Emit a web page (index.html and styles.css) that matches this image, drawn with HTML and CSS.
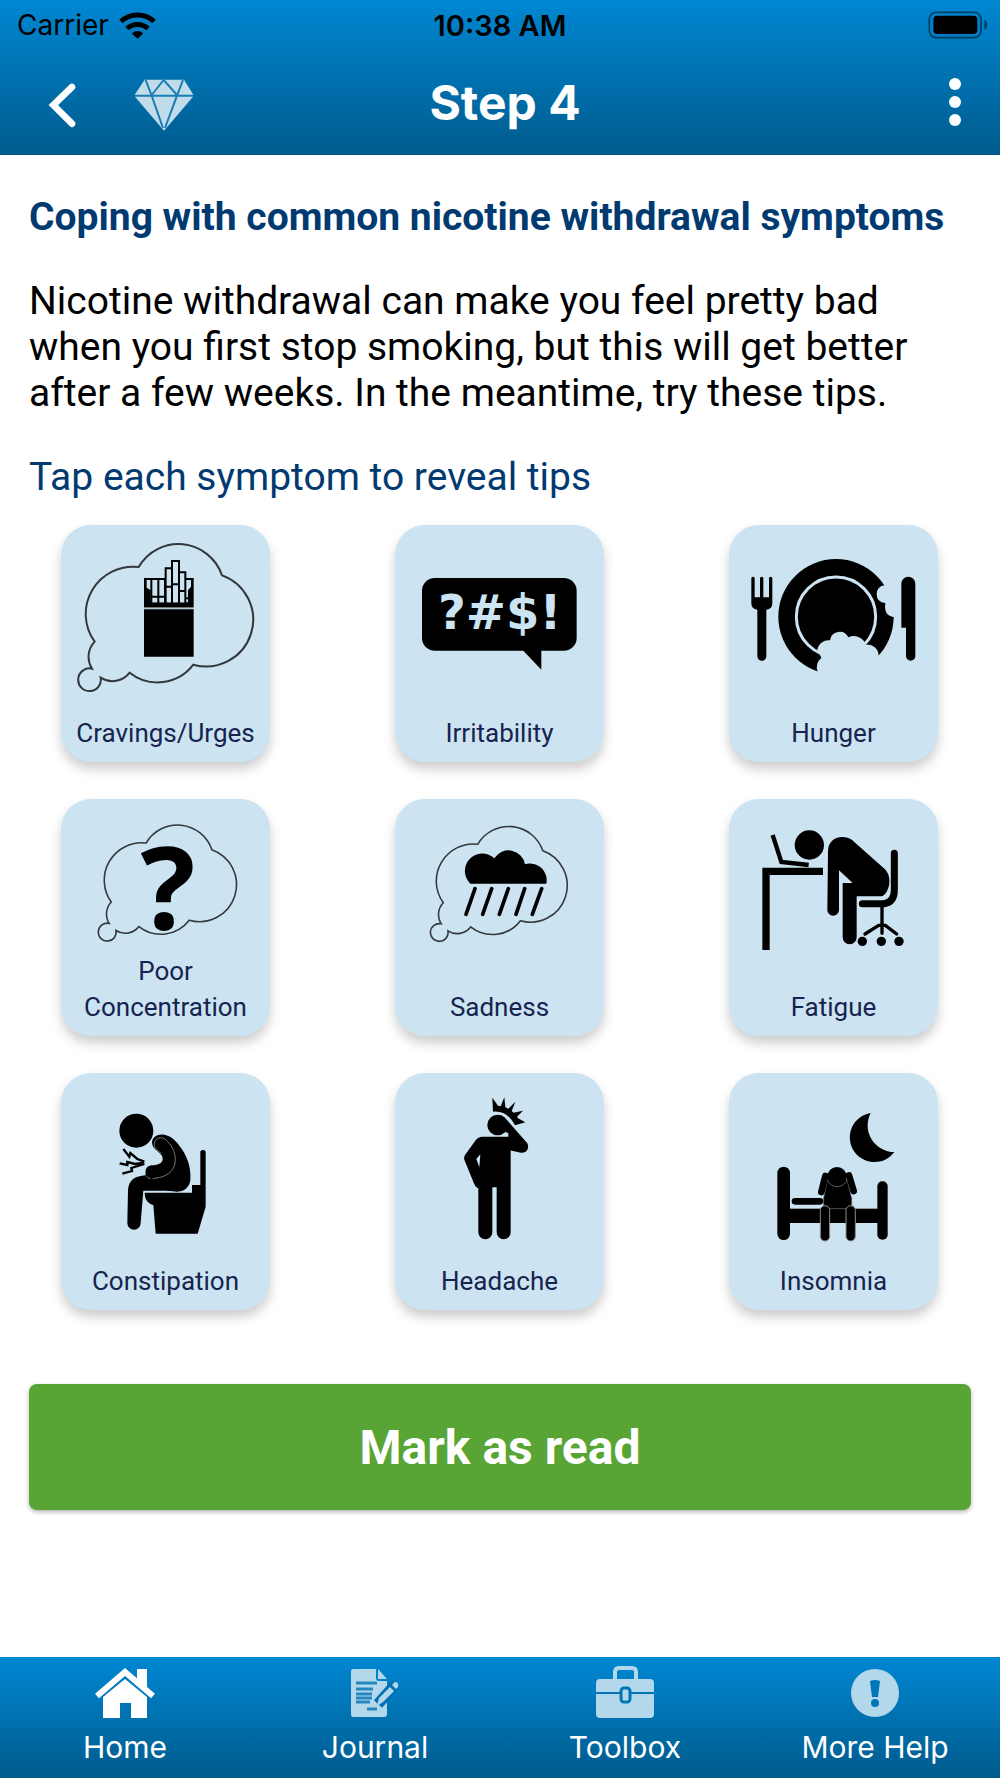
FILE: index.html
```html
<!DOCTYPE html>
<html lang="en">
<head>
    <meta charset="UTF-8">
    <meta name="viewport" content="width=device-width, initial-scale=1">
    <title>Step 4</title>
    <link rel="stylesheet" href="styles.css">
</head>
<body>
    <header class="top">
        <div class="status">
            <span class="carrier">Carrier
                <svg width="37" height="29" viewBox="360 28 112 86" fill="none" stroke="#000" stroke-width="15">
                    <path d="M366 59A73 73 0 0 1 466 59M384 80A48 48 0 0 1 448 80"/>
                    <path d="M416 111L399 95A24 24 0 0 1 433 95Z" fill="#000" stroke="none"/>
                </svg>
            </span>
            <span class="time">10:38 AM</span>
            <svg class="battery" width="60" height="28" viewBox="1283 31 180 84">
                <rect x="1287" y="35" width="155" height="76" rx="20" fill="none" stroke="#000" stroke-opacity=".5" stroke-width="5"/>
                <rect x="1299" y="45" width="132" height="55" rx="12"/>
                <path d="M1452 58Q1461 62 1461 72Q1461 83 1452 87Z" opacity=".5"/>
            </svg>
        </div>
        <div class="nav">
            <div class="nav-left">
                <button class="icon-btn" aria-label="Back">
                    <svg width="26" height="44" viewBox="147 249 78 132" fill="none" stroke="#fff" stroke-width="20">
                        <path d="M216 261L160 315L216 371" stroke-linecap="round"/>
                    </svg>
                </button>
                <button class="icon-btn" aria-label="Rewards">
                    <svg width="58" height="52" viewBox="405 241 174 156">
                        <path d="M434 243H552L579 287V294L492 396L405 294V287Z" fill="#c0dceb"/>
                        <path d="M405 291H579M437 244L455 291L489 388M549 244L531 291L495 388M455 289L491 244L531 289" fill="none" stroke="#1a7db5" stroke-width="6"/>
                    </svg>
                </button>
            </div>
            <h1>Step 4</h1>
            <button class="icon-btn menu-btn" aria-label="Menu">
                <svg width="12" height="50" viewBox="0 0 12 50" fill="#fff">
                    <circle cx="6" cy="6" r="6"/><circle cx="6" cy="24" r="6"/><circle cx="6" cy="42" r="6"/>
                </svg>
            </button>
        </div>
    </header>

    <main>
        <h2>Coping with common nicotine withdrawal symptoms</h2>
        <p>Nicotine withdrawal can make you feel pretty bad when you first stop smoking, but this will get better after a few weeks. In the meantime, try these tips.</p>
        <p class="hint">Tap each symptom to reveal tips</p>

        <div class="symptoms">
            <button class="card">
                <svg viewBox="33 30 627 450">
                    <path id="bubble" d="M266 156A138 138 0 0 1 516 181A140.8 140.8 0 0 1 430 449A135 135 0 0 1 239 473A65 65 0 0 1 152 488A34 34 0 1 1 126 461A66 66 0 0 1 134 380A142 142 0 0 1 266 156Z" fill="none" stroke="#33383c" stroke-width="6"/>
                    <path d="M282 283H431V425H282Z"/>
                    <path d="M282 278H431" stroke="#777" stroke-width="4"/>
                    <path d="M282 188L290 192V218L302 226V262H414V226L423 215V192L431 188V276H282Z"/>
                    <path d="M304 195H345V262H304ZM347 160H365V262H347ZM366 138H387V262H366ZM388 172H406V262H388Z" fill="#cce3f1"/>
                    <g fill="none" stroke="#000" stroke-width="6">
                        <path d="M284 192H345V265M304 192V265M325 192V265M302 245H345M347 265V160H365M366 265V138H387V265M387 172H406V265M406 192H429M347 215H366M366 208H387M387 228H406M406 250H416"/>
                    </g>
                </svg>
                <span>Cravings/Urges</span>
            </button>
            <button class="card">
                <svg viewBox="30 30 627 450">
                    <rect x="111" y="189" width="464" height="218" rx="38"/>
                    <path d="M410 402L469 464V402Z"/>
                    <text class="swear" x="344" y="342">?#$!</text>
                </svg>
                <span>Irritability</span>
            </button>
            <button class="card">
                <svg viewBox="27 30 627 450">
                    <path d="M94 190a5 5 0 0 1 10 0V247H120V190a5 5 0 0 1 10 0V247H147V190a5 5 0 0 1 10 0V265Q157 283 139 284V424A13 13 0 0 1 112 424V284Q94 283 94 265Z"/>
                    <circle cx="348" cy="305" r="173"/>
                    <circle cx="348" cy="305" r="119" fill="none" stroke="#cce3f1" stroke-width="9"/>
                    <path class="cut" d="M293 470Q284 446 304 428L292 404A34 34 0 0 1 330 376A29 29 0 0 1 385 367A39 39 0 0 1 438 389A34 34 0 0 1 476 422L530 500H293Z"/>
                    <path class="cut" d="M493 203V211Q470 215 470 238Q470 262 496 264Q490 304 524 306L560 300V200Z"/>
                    <path d="M544 206A21 21 0 0 1 586 206V423A14 14 0 0 1 558 423V338H544Z"/>
                </svg>
                <span>Hunger</span>
            </button>
            <button class="card">
                <svg viewBox="33 27 627 450">
                    <use href="#bubble" transform="translate(78 36) scale(.79)"/>
                    <text class="question" x="354" y="418">?</text>
                </svg>
                <span>Poor<br>Concentration</span>
            </button>
            <button class="card">
                <svg viewBox="30 27 627 450">
                    <use href="#bubble" transform="translate(70 41) scale(.782)"/>
                    <path d="M256 281A52 52 0 0 1 328 205A50 50 0 0 1 420 223A50 50 0 0 1 484 281Z"/>
                    <path d="M270 296L243 373M320 296L293 373M370 296L343 373M419 296L393 373M470 296L442 373" stroke="#000" stroke-width="11" stroke-linecap="round"/>
                </svg>
                <span>Sadness</span>
            </button>
            <button class="card">
                <svg viewBox="27 27 627 450">
                    <circle cx="268" cy="165" r="44"/>
                    <path d="M158 135L184 216L266 225" fill="none" stroke="#000" stroke-width="13"/>
                    <path d="M127 233H309V255H149V480H127Z"/>
                    <path d="M324 185C324 150 350 140 368 141C385 142 395 148 402 155L495 238C512 256 512 285 500 305Q492 319 480 319H410V442A21 21 0 0 1 368 442V279H398L357 241V360A17 17 0 0 1 322 360Z"/>
                    <g fill="none" stroke="#000" stroke-linecap="round">
                        <path d="M427 341H492Q523 337 523 300V190" stroke-width="21"/>
                        <path d="M486 350V430M435 432L476 406H496L530 432" stroke-width="10"/>
                    </g>
                    <circle cx="427" cy="454" r="14"/><circle cx="484" cy="454" r="14"/><circle cx="537" cy="454" r="14"/>
                </svg>
                <span>Fatigue</span>
            </button>
            <button class="card">
                <svg viewBox="33 24 627 450">
                    <circle cx="259" cy="197" r="51"/>
                    <path d="M306 232C308 205 345 200 370 222C405 255 425 300 421 345C418 370 400 380 380 380C350 376 320 378 280 377L272 474A20 20 0 0 1 232 474L234 375C236 345 255 333 287 331C284 305 295 303 305 301C325 299 340 295 338 278C335 262 306 255 306 232Z"/>
                    <path d="M284 383H426V360H451V260Q451 255 459 255T467 260V425L443 506H317L310 420C295 415 284 405 284 383Z"/>
                    <path d="M334 265C318 255 311 245 313 236C315 218 335 214 346 223C372 245 380 275 374 300C365 330 335 338 308 341M302 341Q294 340 289 334" fill="none" stroke="#777" stroke-width="3"/>
                    <path d="M220 252L238 275L241 264L262 282L283 290M209 295L232 300V291L255 297L283 293M217 326L246 318L244 309L283 297" fill="none" stroke="#000" stroke-width="7"/>
                </svg>
                <span>Constipation</span>
            </button>
            <button class="card">
                <svg viewBox="30 24 627 450">
                    <path d="M322 98L339 122L347 124L358 97L361 127L370 131L391 110L380 138L386 143L414 137L396 155L399 160L421 172L390 181Q367 136 324 140Z"/>
                    <circle cx="338" cy="180" r="31"/>
                    <path d="M345 150Q358 154 366 165L427 235C434 250 425 265 408 263L370 255V205L357 199Z"/>
                    <path fill-rule="evenodd" d="M292 215H377V502A21 21 0 0 1 335 502V367H322V502A21 21 0 0 1 280 502V370C272 368 268 358 264 348L238 284Q236 276 240 270L272 226Q280 215 292 215ZM286 268L274 282L283 307Z"/>
                </svg>
                <span>Headache</span>
            </button>
            <button class="card">
                <svg viewBox="27 24 627 450">
                    <path d="M452 144A74 74 0 1 0 523 261A80 80 0 0 1 452 144Z"/>
                    <rect x="172" y="305" width="38" height="220" rx="19"/>
                    <rect x="472" y="349" width="31" height="175" rx="15"/>
                    <rect x="205" y="431" width="270" height="43"/>
                    <rect x="215" y="399" width="95" height="20" rx="10"/>
                    <path d="M322 345L311 400V431H395V400L381 345Z" stroke="#566067" stroke-width="2"/>
                    <path d="M316 333L304 381M387 331L401 378" stroke="#000" stroke-width="20" stroke-linecap="round"/>
                    <circle cx="351" cy="335" r="29"/>
                    <path d="M321 346Q334 365 351 365T382 346" fill="none" stroke="#566067" stroke-width="3"/>
                    <g stroke="#908c88" stroke-width="3">
                        <rect x="301" y="422" width="28" height="106" rx="14"/>
                        <rect x="378" y="422" width="28" height="106" rx="14"/>
                    </g>
                </svg>
                <span>Insomnia</span>
            </button>
        </div>

        <button class="read-btn">Mark as read</button>
    </main>

    <nav class="tabs">
        <a href="#home" class="active">
            <svg width="60" height="50" viewBox="0 0 60 50" fill="#fff">
                <path d="M42 1H52V20L42 12Z"/>
                <path d="M2 28L30 4L58 28" fill="none" stroke="#fff" stroke-width="6"/>
                <path d="M8 29L30 11L52 29V50H36V35H25V50H8Z"/>
            </svg>
            Home
        </a>
        <a href="#journal">
            <svg width="50" height="50" viewBox="0 0 50 50">
                <path d="M3 1H26V10Q26 13 29 13H37V46Q37 49 34 49H3Q1 49 1 46V3Q1 1 3 1Z" fill="#b3d7eb"/>
                <path d="M28 1L37 11H28Z" fill="#b3d7eb"/>
                <path d="M6 15H27M6 21H23M6 26H22M6 30H22M6 34H20M17 41H27" stroke="#2487bf" stroke-width="3"/>
                <path d="M28 36L45 17" stroke="#0072b4" stroke-width="11"/>
                <path d="M27 38L29 30L40 19L44 23L33 34ZM42 17L45 14Q49 14 48 19L46 21Z" fill="#b3d7eb"/>
            </svg>
            Journal
        </a>
        <a href="#toolbox">
            <svg width="58" height="52" viewBox="0 0 58 52">
                <path d="M19 13V6Q19 2 23 2H36Q40 2 40 6V13" fill="none" stroke="#b3d7eb" stroke-width="4"/>
                <rect y="13" width="58" height="39" rx="4" fill="#b3d7eb"/>
                <path d="M0 27H58" stroke="#0075b7" stroke-width="2"/>
                <rect x="25" y="22" width="9" height="14" rx="3" fill="#b3d7eb" stroke="#0075b7" stroke-width="3"/>
            </svg>
            Toolbox
        </a>
        <a href="#help">
            <svg width="50" height="50" viewBox="0 0 50 50">
                <circle cx="25" cy="25" r="24" fill="#b3d7eb"/>
                <path d="M20 13Q25 11 30 13L28 29H22Z" fill="#0075b7"/>
                <circle cx="25" cy="35" r="4" fill="#0075b7"/>
            </svg>
            More Help
        </a>
    </nav>
</body>
</html>
```
FILE: styles.css
```css
* {
    box-sizing: border-box;
}

body {
    margin: 0;
    min-height: 100vh;
    display: flex;
    flex-direction: column;
    background: #fff;
    color: #000;
    font-family: Roboto, sans-serif;
}

button {
    border: 0;
    padding: 0;
    font-family: inherit;
    cursor: pointer;
}

svg {
    display: block;
    overflow: visible;
}

/* header */
.top {
    background: linear-gradient(#0087d3, #005b8c);
    font-family: Inter, sans-serif;
}

.status {
    display: grid;
    grid-template-columns: 1fr auto 1fr;
    align-items: center;
    height: 50px;
    padding: 0 12px;
    font-size: 28px;
}

.carrier {
    display: flex;
    align-items: center;
    gap: 10px;
    padding-left: 5px;
}

.time {
    font-size: 29px;
    font-weight: 600;
}

.battery {
    justify-self: end;
}

.nav {
    display: grid;
    grid-template-columns: 1fr auto 1fr;
    align-items: center;
    height: 105px;
    padding: 0 39px 0 49px;
}

.nav-left {
    display: flex;
    align-items: center;
    gap: 60px;
    padding-top: 4px;
}

.icon-btn {
    background: none;
}

.menu-btn {
    justify-self: end;
}

h1 {
    margin: 0;
    color: #fff;
    font-size: 48px;
    font-weight: 700;
}

/* content */
main {
    flex: 1;
    padding: 39px 29px;
    font-size: 39px;
    line-height: 46px;
}

h2 {
    margin: 0;
    color: #013a70;
    font-size: 39px;
    font-weight: 700;
}

p {
    margin: 38px 0;
}

.hint {
    margin-bottom: 25px;
    color: #013a70;
}

.symptoms {
    display: grid;
    grid-template-columns: repeat(3, 209px);
    justify-content: space-between;
    gap: 37px;
    padding: 0 33px 0 32px;
}

.card {
    display: flex;
    flex-direction: column;
    justify-content: space-between;
    min-height: 237px;
    padding-bottom: 11px;
    border-radius: 30px;
    background: #cce3f1;
    box-shadow: 0 7px 12px rgba(0, 0, 0, 0.2);
    color: #16244f;
    font-size: 26px;
    line-height: 36px;
    text-align: center;
}

.card svg {
    width: 100%;
    height: 150px;
}

.card span {
    width: 100%;
}

.cut {
    fill: #cce3f1;
}

.swear {
    fill: #cce3f1;
    font: bold 144px "DejaVu Sans", sans-serif;
    text-anchor: middle;
}

.question {
    font: 700 345px "Open Sans", sans-serif;
    text-anchor: middle;
}

.read-btn {
    width: 100%;
    margin-top: 74px;
    padding: 36px 0 34px;
    border-radius: 8px;
    background: #58a535;
    box-shadow: 0 2px 4px rgba(0, 0, 0, 0.3);
    color: #fff;
    font-size: 48px;
    font-weight: 700;
    line-height: 56px;
}

/* bottom bar */
.tabs {
    display: grid;
    grid-template-columns: repeat(4, 1fr);
    padding: 9px 0 13px;
    background: linear-gradient(#0087d3, #005b8c);
}

.tabs a {
    display: flex;
    flex-direction: column;
    align-items: center;
    justify-content: flex-end;
    gap: 11px;
    color: #fff;
    font-family: Inter, sans-serif;
    font-size: 30px;
    line-height: 36px;
    text-decoration: none;
}
```
